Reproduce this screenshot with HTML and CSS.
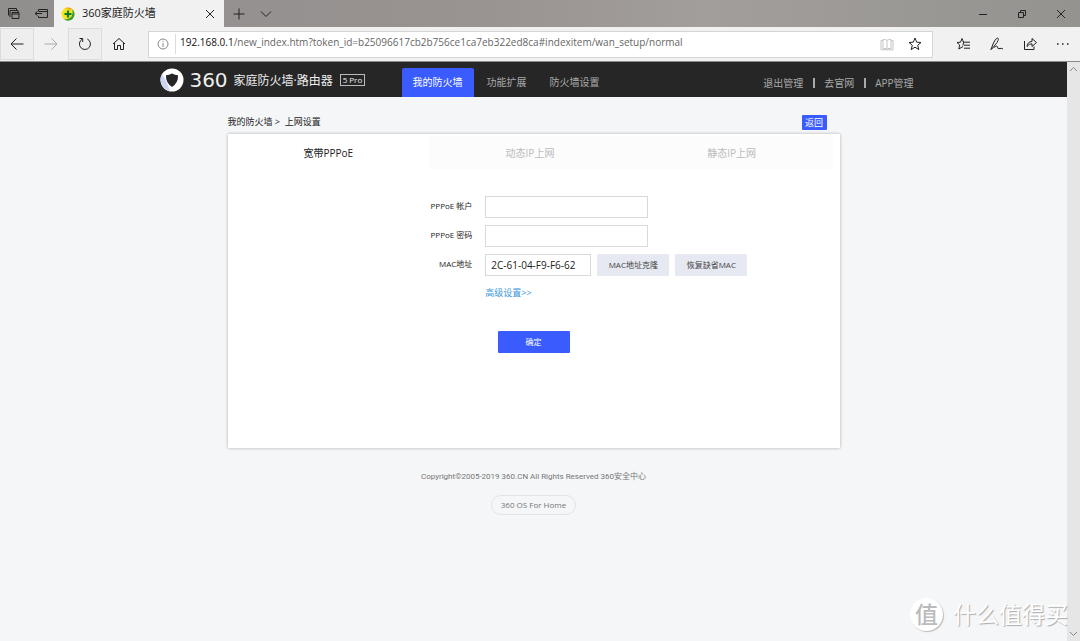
FILE: index.html
```
<!DOCTYPE html>
<html lang="zh-CN">
<head>
<meta charset="utf-8">
<meta name="viewport" content="width=device-width, initial-scale=1">
<title>360家庭防火墙</title>
<link rel="stylesheet" href="styles.css">
</head>
<body>
<div class="browser">
  <div class="titlebar">
    <div class="tab-tools">
      <button class="chrome-btn" aria-label="标签页"><svg width="13" height="13" viewBox="0 0 13 13"><path d="M1.500 8.500V1.500H9.500V3M3 10V3.500H11V5"/><path d="M5 5.500H12V11.500H5ZM5 7H12"/></svg></button>
      <button class="chrome-btn" aria-label="搁置标签页"><svg width="15" height="13" viewBox="0 0 15 13"><path d="M4.500 4V2.500H13.500V10.500H4.500V9M4.500 4.500H13.500M1 6.500H8M3.500 4.500L1 6.500L3.500 8.500"/></svg></button>
    </div>
    <div class="browser-tab">
      <svg width="14" height="14" viewBox="0 0 14 14"><circle cx="7" cy="7" r="6.500" fill="#f5e51b"/><path d="M1 4.500A6.500 6.500 0 0 1 11 1.800L9.500 3.500A5 5 0 0 0 1 4.500Z" fill="#f0a818"/><path d="M11 2A6.500 6.500 0 0 1 3 12.300Q8 12.500 10.500 9.500Q12.500 6 11 2Z" fill="#2f9e33"/><path d="M7 3.500V10.500M3.500 7H10.500" stroke="#0b7d25" stroke-width="2.200"/></svg>
      <span class="browser-tab-title">360家庭防火墙</span>
      <button class="chrome-btn" aria-label="关闭标签页"><svg width="10" height="10" viewBox="0 0 10 10"><path d="M1 1L9 9M9 1L1 9"/></svg></button>
    </div>
    <div class="tab-actions">
      <button class="chrome-btn" aria-label="新建标签页"><svg width="12" height="12" viewBox="0 0 12 12"><path d="M6 .5V11.500M.5 6H11.500"/></svg></button>
      <button class="chrome-btn" aria-label="标签预览"><svg width="12" height="12" viewBox="0 0 12 12"><path d="M1 3.500L6 8.500L11 3.500"/></svg></button>
    </div>
    <div class="window-actions">
      <button class="chrome-btn" aria-label="最小化"><svg width="10" height="10" viewBox="0 0 10 10"><path d="M1 5.500H9"/></svg></button>
      <button class="chrome-btn" aria-label="还原"><svg width="10" height="10" viewBox="0 0 10 10"><path d="M1.500 3.500H6.500V8.500H1.500ZM3.500 3V1.500H8.500V6.500H7"/></svg></button>
      <button class="chrome-btn" aria-label="关闭"><svg width="10" height="10" viewBox="0 0 10 10"><path d="M1 1L9 9M9 1L1 9"/></svg></button>
    </div>
  </div>

  <div class="toolbar">
    <div class="history">
      <button class="tool-btn tool-btn-boxed" aria-label="后退"><svg width="14" height="14" viewBox="0 0 14 14"><path d="M13.500 7H1M6.500 1.500L1 7L6.500 12.500"/></svg></button>
      <button class="tool-btn tool-btn-off" aria-label="前进"><svg width="14" height="14" viewBox="0 0 14 14"><path d="M.5 7H13M7.500 1.500L13 7L7.500 12.500"/></svg></button>
      <button class="tool-btn tool-btn-boxed" aria-label="刷新"><svg width="14" height="14" viewBox="0 0 14 14"><path d="M9.300 2A5.500 5.500 0 1 1 4.200 2.200M4.700 5V1.500H1.500"/></svg></button>
      <button class="tool-btn" aria-label="主页"><svg width="14" height="14" viewBox="0 0 14 14"><path d="M1 7L7 1.500L13 7M2.500 6V12.500H5.500V8.500H8.500V12.500H11.500V6"/></svg></button>
    </div>
    <div class="address">
      <svg class="address-info" width="12" height="12" viewBox="0 0 12 12"><circle cx="6" cy="6" r="5"/><path d="M6 5V9M6 3V4"/></svg>
      <div class="address-url"><span class="address-host">192.168.0.1</span>/new_index.htm?token_id=b25096617cb2b756ce1ca7eb322ed8ca#indexitem/wan_setup/normal</div>
      <button class="chrome-btn chrome-btn-off" aria-label="阅读视图"><svg width="14" height="13" viewBox="0 0 14 13"><path d="M7 2.500V11.500M7 2.500Q6 1.500 4.500 1.500H3V10.500H5Q6.500 10.500 7 11.500Q7.500 10.500 9 10.500H11V1.500H9.500Q8 1.500 7 2.500M3 2.500H1V11.800H13V2.500H11"/></svg></button>
      <button class="chrome-btn" aria-label="收藏"><svg width="14" height="14" viewBox="0 0 14 14"><path d="M7 1L8.700 5.200L13 5.500L9.700 8.300L10.800 12.600L7 10.200L3.200 12.600L4.300 8.300L1 5.500L5.300 5.200Z"/></svg></button>
    </div>
    <div class="toolbar-actions">
      <button class="chrome-btn" aria-label="收藏夹"><svg width="15" height="14" viewBox="0 0 15 14"><path d="M7 8.500L7.500 5.200L6 1.500L4.500 5.200L1 5.500L3.700 8L2.800 12L7 9.500M7 5.200H14M8 8.200H14M8 11.200H14"/></svg></button>
      <button class="chrome-btn" aria-label="添加笔记"><svg width="14" height="14" viewBox="0 0 14 14"><path d="M1 12.500L3 7Q5.500 1 7.500 1Q9.500 1.500 7 5.500L3 10.500ZM1 12.500L3 10.500M4 10.500Q7 8 7.500 10Q7.500 12.500 10 11.500Q12 11 13 12"/></svg></button>
      <button class="chrome-btn" aria-label="共享"><svg width="14" height="14" viewBox="0 0 14 14"><path d="M1.500 4V12.500H11V9.500M4 9.500Q4.500 4.500 9 4.500V1.500L13.500 5.500L9 9.500V6.800Q6 6.500 4 9.500Z"/></svg></button>
      <button class="chrome-btn" aria-label="更多"><svg width="14" height="14" viewBox="0 0 14 14"><path d="M1 7H2.500M6 7H7.500M11 7H12.500" stroke-width="1.500"/></svg></button>
    </div>
  </div>

  <div class="viewport">
    <div class="page">
      <header class="header">
        <div class="header-inner">
          <div class="brand">
            <svg width="24" height="24" viewBox="0 0 24 24"><circle cx="12" cy="12" r="11.500" fill="#fff"/><path d="M2 6A11.500 11.500 0 0 0 10 23L7 15Z" fill="#cdd3f3"/><path d="M12 5.500Q15 7 18 7.200Q18.500 14.500 12 19Q5.500 14.500 6 7.200Q9 7 12 5.500Z" fill="#262626"/></svg>
            <span class="brand-mark">360</span>
            <span class="brand-name">家庭防火墙·路由器</span>
            <span class="brand-model">5 Pro</span>
          </div>
          <nav class="nav">
            <a class="nav-link nav-link-active" href="#firewall">我的防火墙</a>
            <a class="nav-link" href="#extend">功能扩展</a>
            <a class="nav-link" href="#settings">防火墙设置</a>
          </nav>
          <nav class="user-links">
            <a class="user-link" href="#logout">退出管理</a>
            <a class="user-link" href="#site">去官网</a>
            <a class="user-link" href="#app">APP管理</a>
          </nav>
        </div>
      </header>

      <main class="content">
        <div class="crumbs">
          <span>我的防火墙 &gt;&nbsp; 上网设置</span>
          <button class="back">返回</button>
        </div>
        <section class="panel">
          <div class="modes" role="tablist">
            <button class="mode mode-active" role="tab" aria-selected="true">宽带PPPoE</button>
            <button class="mode" role="tab" aria-selected="false">动态IP上网</button>
            <button class="mode" role="tab" aria-selected="false">静态IP上网</button>
          </div>
          <form class="form">
            <label class="form-label" for="account">PPPoE 帐户</label>
            <div class="form-field"><input class="input" id="account" type="text"></div>
            <label class="form-label" for="password">PPPoE 密码</label>
            <div class="form-field"><input class="input" id="password" type="password"></div>
            <label class="form-label" for="mac">MAC地址</label>
            <div class="form-field">
              <input class="input input-mac" id="mac" type="text" value="2C-61-04-F9-F6-62">
              <button class="btn" type="button">MAC地址克隆</button>
              <button class="btn" type="button">恢复缺省MAC</button>
            </div>
            <a class="advanced" href="#advanced">高级设置&gt;&gt;</a>
            <button class="btn btn-primary" type="button">确定</button>
          </form>
        </section>
      </main>

      <footer class="footer">
        <p class="copyright">Copyright©2005-2019 360.CN All Rights Reserved 360安全中心</p>
        <a class="os-link" href="#os">360 OS For Home</a>
      </footer>
    </div>
    <div class="scrollbar">
      <svg width="9" height="8" viewBox="0 0 9 8"><path d="M1 6L4.500 2.500L8 6"/></svg>
      <svg width="9" height="8" viewBox="0 0 9 8"><path d="M1 2L4.500 5.500L8 2"/></svg>
    </div>
  </div>
  <div class="watermark"><span class="watermark-badge">值</span><span>什么值得买</span></div>
</div>
</body>
</html>
```
FILE: styles.css
```
* { box-sizing: border-box; }

body {
  margin: 0;
  font-family: "Open Sans", "Noto Sans CJK SC", sans-serif;
  font-size: 10px;
  color: #222;
}

button, input { font: inherit; color: inherit; }
button { border: 0; padding: 0; background: none; }
a { color: inherit; text-decoration: none; }
svg { display: block; flex: none; }

.browser {
  position: relative;
  display: flex;
  flex-direction: column;
  min-height: 100vh;
}

/* Window chrome */
.titlebar {
  display: flex;
  height: 27px;
  background: linear-gradient(90deg, #918f8e, #999391 45%, #a29e9c 65%, #949390);
}

.tab-tools, .tab-actions, .window-actions, .toolbar-actions {
  display: flex;
  align-items: center;
}

.tab-tools { width: 54px; padding-left: 7px; gap: 14px; }
.tab-actions { padding-left: 9px; gap: 15px; }
.window-actions { margin-left: auto; padding-right: 14px; gap: 29px; }

.chrome-btn svg, .tool-btn svg, .address-info, .scrollbar svg {
  fill: none;
  stroke: #222;
}

.chrome-btn-off svg { stroke: #c4c4c4; }

.browser-tab {
  display: flex;
  align-items: center;
  gap: 7px;
  width: 170px;
  padding: 0 9px 0 7px;
  background: #f1f1f1;
}

.browser-tab-title { flex: 1; font-size: 11px; line-height: 16px; padding-bottom: 2px; }

.toolbar {
  display: flex;
  align-items: center;
  height: 35px;
  background: #f1f1f1;
  border-bottom: 1px solid #8a8a8a;
}

.history { display: flex; width: 148px; }

.tool-btn {
  display: flex;
  align-items: center;
  justify-content: center;
  width: 34px;
  height: 32px;
  border: 1px solid transparent;
}

.tool-btn-boxed { border-color: #dcdcdc; background: #eee; }
.tool-btn-off svg { stroke: #aaa; }

.address {
  display: flex;
  flex: 1;
  align-items: center;
  gap: 14px;
  height: 27px;
  padding: 0 10px 0 8px;
  background: #fff;
  border: 1px solid #d5d5d5;
}

.address .address-info { margin-right: -8px; stroke: #888; }

.address-url {
  flex: 1;
  padding: 0 0 3px 4px;
  border-left: 1px solid #ddd;
  font-size: 10px;
  line-height: 17px;
  color: #666;
}

.address-host { color: #111; }

.toolbar-actions { padding: 0 10px 0 23px; gap: 19px; }

/* Router page */
.viewport { display: flex; flex: 1; }

.page { flex: 1; background: #f4f6f8; }

.scrollbar {
  display: flex;
  flex-direction: column;
  justify-content: space-between;
  align-items: center;
  width: 13px;
  padding: 3px 0;
  background: #e6e6e6;
}

.scrollbar svg { stroke: #888; }

.header { background: #262626; color: #aaa; }

.header-inner {
  display: flex;
  align-items: flex-end;
  max-width: 760px;
  height: 35px;
  margin: 0 auto;
  padding-left: 6px;
}

.brand {
  display: flex;
  align-items: center;
  width: 242px;
  height: 35px;
  color: #eee;
}

.brand-mark {
  width: 50px;
  font-family: "DejaVu Sans", sans-serif;
  font-size: 20px;
  line-height: 24px;
  text-align: center;
}

.brand-name { font-size: 12px; }

.brand-model {
  margin-left: 7px;
  padding: 0 2px;
  border: 1px solid #bbb;
  font-size: 8px;
  line-height: 10px;
}

.nav { display: flex; gap: 3px; }

.nav-link {
  padding: 0 10px;
  line-height: 29px;
}

.nav-link-active {
  padding: 0 11px;
  border-radius: 2px 2px 0 0;
  background: #3a5cff;
  color: #fff;
}

.user-links { display: flex; margin-left: auto; padding-bottom: 9px; }

.user-link { line-height: 10px; }

.user-link + .user-link {
  margin-left: 10px;
  padding-left: 9px;
  border-left: 2px solid #aaa;
}

.content { max-width: 612px; margin: 0 auto; }

.crumbs {
  display: flex;
  align-items: flex-end;
  justify-content: space-between;
  height: 37px;
  padding: 0 13px 4px 0;
  font-size: 9px;
}

.crumbs span { line-height: 17px; }

.back {
  width: 25px;
  border-radius: 1px;
  background: #3a5cff;
  color: #fff;
  line-height: 15px;
}

.panel {
  min-height: 314px;
  background: #fff;
  box-shadow: 0 0 3px rgba(0, 0, 0, .3);
}

.modes {
  display: grid;
  grid-template-columns: repeat(3, 1fr);
  padding: 2px 7px 0 0;
}

.mode { height: 33px; background: #fcfcfc; color: #bbb; }
.mode-active { background: #fff; color: #222; }

.form {
  display: grid;
  grid-template-columns: 40% 1fr;
  gap: 7px 13px;
  padding-top: 27px;
  font-size: 8px;
}

.form-label { text-align: right; line-height: 20px; }

.form-field { display: flex; gap: 6px; }

.input {
  width: 163px;
  height: 22px;
  padding: 0 5px;
  border: 1px solid #d9d9d9;
  background: #fff;
  font-size: 10px;
}

.input-mac { width: 106px; }

.btn {
  width: 72px;
  height: 22px;
  padding-bottom: 2px;
  border-radius: 1px;
  background: #e6e9f1;
  color: #444;
}

.advanced {
  grid-column: 2;
  justify-self: start;
  font-size: 9px;
  line-height: 20px;
  color: #3e98dc;
}

.btn-primary {
  grid-column: 1 / -1;
  justify-self: center;
  margin-top: 21px;
  background: #3a5cff;
  color: #fff;
}

.footer {
  display: flex;
  flex-direction: column;
  align-items: center;
  gap: 12px;
  padding-top: 22px;
  color: #777;
  font-size: 8px;
}

.copyright {
  margin: 0;
  font-family: Roboto, "Noto Sans CJK SC", sans-serif;
  line-height: 13px;
}

.os-link {
  padding: 0 9px;
  border: 1px solid #e2e3e6;
  border-radius: 10px;
  line-height: 18px;
}

/* Overlay in the window corner */
.watermark {
  position: absolute;
  right: 12px;
  bottom: 10px;
  display: flex;
  align-items: center;
  gap: 10px;
  color: #fff;
  font-size: 23px;
  line-height: 33px;
  text-shadow: 1px 1px 1px #aaa;
}

.watermark-badge {
  width: 33px;
  height: 33px;
  border-radius: 50%;
  background: #fff;
  box-shadow: 1px 1px 1px #bbb;
  color: #bbb;
  font-weight: 500;
  line-height: 32px;
  text-align: center;
  text-shadow: none;
}
```
